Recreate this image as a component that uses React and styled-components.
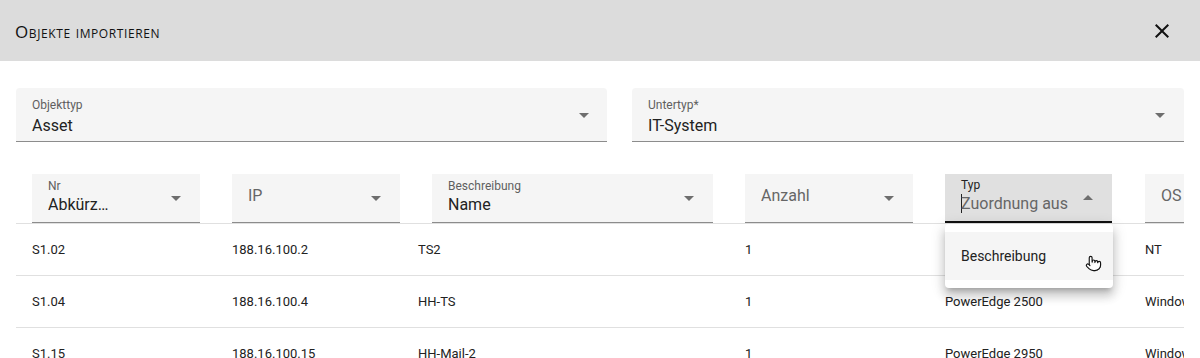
import styled, { createGlobalStyle } from "styled-components";
import { Pointer } from "lucide-react";

const GlobalStyle = createGlobalStyle`
  html, body { margin: 0; padding: 0; background: #fff; }
  body { font-family: Roboto, "Noto Sans", sans-serif; color: rgba(0,0,0,0.87); overflow: hidden; }
`;

const Dialog = styled.div`
  width: 1200px;
  height: 358px;
  overflow: hidden;
  background: #fff;
`;

const Header = styled.header`
  height: 61px;
  background: #dcdcdc;
  display: flex;
  align-items: center;
  justify-content: space-between;
  padding: 0 26px 0 15px;
`;

const Title = styled.h2`
  margin: 0;
  font-family: "Open Sans", Lato, sans-serif;
  font-size: 17px;
  font-weight: 500;
  font-variant: small-caps;
  letter-spacing: 0.6px;
  color: #111;
  padding-top: 1px;
`;

const CloseBtn = styled.svg`
  width: 24px;
  height: 24px;
  fill: #111;
`;

const Body = styled.div`
  padding: 27px 16px 0;
`;

const SelectRow = styled.div`
  display: grid;
  grid-template-columns: 591px 1fr;
  gap: 25px;
`;

const Select = styled.div`
  position: relative;
  box-sizing: border-box;
  height: 54px;
  background: #f5f5f5;
  border-radius: 4px 4px 0 0;
  border-bottom: 1px solid #8c8c8c;
  padding: 5px 16px 0;
  display: flex;
  flex-direction: column;
  justify-content: center;
`;

const Label = styled.div`
  font-size: 12px;
  line-height: 14px;
  color: #5f5f5f;
`;

const Value = styled.div`
  font-size: 16px;
  line-height: 22px;
  margin-top: 3px;
  color: #222;
`;

const Arrow = styled.svg`
  position: absolute;
  right: ${(p) => p.$right ?? 12}px;
  top: 50%;
  margin-top: -12px;
  width: 24px;
  height: 24px;
  fill: #6e6e6e;
`;

const Table = styled.div`
  margin-top: 32px;
  overflow: hidden;
`;

const Row = styled.div`
  display: grid;
  grid-template-columns: 200px 200px 313px 200px 200px 1fr;
  border-bottom: 1px solid #e0e0e0;
  height: ${(p) => (p.$head ? "49px" : "51px")};
  align-items: ${(p) => (p.$head ? "start" : "center")};
`;

const HeadCell = styled.div`
  position: relative;
  padding-left: 16px;
  padding-right: ${(p) => (p.$open ? 17 : 16)}px;
  overflow: visible;
`;

const Filter = styled.div`
  position: relative;
  height: ${(p) => (p.$focus ? 47 : 48)}px;
  background: ${(p) => (p.$focus ? "#e0e0e0" : "#f5f5f5")};
  border-bottom: ${(p) => (p.$focus ? "2px solid #111" : "1px solid #8c8c8c")};
  padding: 0 16px;
  display: flex;
  flex-direction: column;
  justify-content: center;
  overflow: hidden;
  white-space: nowrap;
`;

const FilterLabel = styled.div`
  font-size: 12px;
  line-height: 14px;
  color: ${(p) => (p.$focus ? "#222" : "#5f5f5f")};
  margin-top: -2px;
`;

const FilterValue = styled.div`
  font-size: 16px;
  line-height: 22px;
  color: ${(p) => (p.$placeholder ? "#666" : "#222")};
  margin-top: ${(p) => (p.$labelled ? "1px" : "-4px")};
  overflow: hidden;
  text-overflow: ${(p) => (p.$clip ? "clip" : "ellipsis")};
  max-width: ${(p) => p.$max ?? 200}px;
  position: relative;
`;

const Caret = styled.span`
  display: inline-block;
  width: 1px;
  height: 19px;
  background: #222;
  vertical-align: -4px;
  margin-right: -1px;
`;

const Cell = styled.div`
  padding-left: ${(p) => p.$pad ?? 16}px;
  font-size: 13px;
  color: #222;
  white-space: nowrap;
  overflow: hidden;
`;

const Menu = styled.div`
  position: absolute;
  left: 16px;
  top: 50px;
  width: 168px;
  background: #fff;
  border-radius: 4px;
  box-shadow: 0 5px 5px -3px rgba(0,0,0,0.2), 0 8px 10px 1px rgba(0,0,0,0.14), 0 3px 14px 2px rgba(0,0,0,0.12);
  padding: 8px 0;
  z-index: 5;
`;

const Option = styled.div`
  position: relative;
  height: 48px;
  background: #f5f5f5;
  display: flex;
  align-items: center;
  padding-left: 16px;
  font-size: 14px;
  color: #222;
`;

const Hand = styled.div`
  position: absolute;
  left: 140px;
  top: 23px;
  line-height: 0;
`;

const ArrowDown = ({ right }) => (
  <Arrow $right={right} viewBox="0 0 24 24"><path d="M7 10l5 5 5-5z" /></Arrow>
);
const ArrowUp = ({ right }) => (
  <Arrow $right={right} viewBox="0 0 24 24"><path d="M7 14l5-5 5 5z" /></Arrow>
);

const rows = [
  ["S1.02", "188.16.100.2", "TS2", "1", "", "NT"],
  ["S1.04", "188.16.100.4", "HH-TS", "1", "PowerEdge 2500", "Windows"],
  ["S1.15", "188.16.100.15", "HH-Mail-2", "1", "PowerEdge 2950", "Windows"],
];

const App = () => (
  <Dialog>
    <GlobalStyle />
    <Header>
      <Title>Objekte importieren</Title>
      <CloseBtn viewBox="0 0 24 24">
        <path d="M19 6.41L17.59 5 12 10.59 6.41 5 5 6.41 10.59 12 5 17.59 6.41 19 12 13.41 17.59 19 19 17.59 13.41 12z" />
      </CloseBtn>
    </Header>
    <Body>
      <SelectRow>
        <Select>
          <Label>Objekttyp</Label>
          <Value>Asset</Value>
          <ArrowDown right={11} />
        </Select>
        <Select>
          <Label>Untertyp*</Label>
          <Value>IT-System</Value>
          <ArrowDown right={12} />
        </Select>
      </SelectRow>
      <Table>
        <Row $head>
          <HeadCell>
            <Filter>
              <FilterLabel>Nr</FilterLabel>
              <FilterValue $labelled $max={64}>Abkürzung</FilterValue>
              <ArrowDown right={12} />
            </Filter>
          </HeadCell>
          <HeadCell>
            <Filter>
              <FilterValue $placeholder>IP</FilterValue>
              <ArrowDown right={12} />
            </Filter>
          </HeadCell>
          <HeadCell>
            <Filter>
              <FilterLabel>Beschreibung</FilterLabel>
              <FilterValue $labelled>Name</FilterValue>
              <ArrowDown right={12} />
            </Filter>
          </HeadCell>
          <HeadCell>
            <Filter>
              <FilterValue $placeholder>Anzahl</FilterValue>
              <ArrowDown right={12} />
            </Filter>
          </HeadCell>
          <HeadCell $open>
            <Filter $focus>
              <FilterLabel $focus>Typ</FilterLabel>
              <FilterValue $labelled $placeholder $clip $max={107}>
                <Caret />Zuordnung auswählen
              </FilterValue>
              <ArrowUp right={12} />
            </Filter>
            <Menu>
              <Option>
                Beschreibung
                <Hand><Pointer size={17} strokeWidth={1.6} fill="#fff" color="#111" /></Hand>
              </Option>
            </Menu>
          </HeadCell>
          <HeadCell>
            <Filter>
              <FilterValue $placeholder>OS</FilterValue>
            </Filter>
          </HeadCell>
        </Row>
        {rows.map((r) => (
          <Row key={r[0]}>
            <Cell>{r[0]}</Cell>
            <Cell>{r[1]}</Cell>
            <Cell $pad={2}>{r[2]}</Cell>
            <Cell>{r[3]}</Cell>
            <Cell>{r[4]}</Cell>
            <Cell>{r[5]}</Cell>
          </Row>
        ))}
      </Table>
    </Body>
  </Dialog>
);

export default App;
